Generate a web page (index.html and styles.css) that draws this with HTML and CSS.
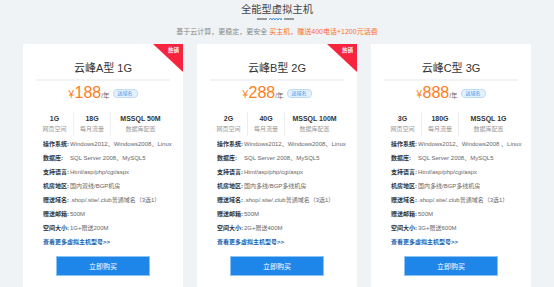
FILE: index.html
```html
<!DOCTYPE html>
<html lang="zh-CN">
<head>
<meta charset="utf-8">
<title>全能型虚拟主机</title>
<link rel="stylesheet" href="styles.css">
</head>
<body>
<div class="page">
  <header class="head">
    <h1 class="head-title">全能型虚拟主机</h1>
    <div class="deco">
      <span class="deco-line"></span>
      <svg class="deco-wave" width="13" height="4" viewBox="0 0 13 4"><path d="M0 3 L1.5 1 L3 3 L4.5 1 L6 3 L7.5 1 L9 3 L10.5 1 L12 3 L13 1" fill="none" stroke="#3a8ee6" stroke-width="1"/></svg>
      <span class="deco-line"></span>
    </div>
    <p class="head-sub">基于云计算，更稳定，更安全 <span class="hl">买主机，赠送400电话+1200元话费</span></p>
  </header>

  <div class="cards">
    <div class="card">
      <span class="hot"></span><span class="hot-text">热销</span>
      <div class="card-title">云峰A型 1G</div>
      <div class="price"><span class="yen">¥</span><span class="num">188</span><span class="unit">/年</span><span class="badge">送域名</span></div>
      <div class="specs">
        <div class="spec"><b>1G</b><span>网页空间</span></div>
        <div class="spec"><b>18G</b><span>每月流量</span></div>
        <div class="spec"><b>MSSQL 50M</b><span>数据库配置</span></div>
      </div>
      <ul class="rows">
        <li><b>操作系统:</b>Windows2012、Windows2008、Linux</li>
        <li><b>数据库:</b>SQL Server 2008、MySQL5</li>
        <li><b>支持语言:</b>Html/asp/php/cgi/aspx</li>
        <li><b>机房地区:</b>国内双线/BGP机房</li>
        <li><b>赠送域名:</b>.shop/.site/.club普通域名（3选1）</li>
        <li><b>赠送邮箱:</b>500M</li>
        <li><b>空间大小:</b>1G+赠送200M</li>
      </ul>
      <a class="more" href="#">查看更多虚拟主机型号&gt;&gt;</a>
      <button class="buy">立即购买</button>
    </div>

    <div class="card">
      <span class="hot"></span><span class="hot-text">热销</span>
      <div class="card-title">云峰B型 2G</div>
      <div class="price"><span class="yen">¥</span><span class="num">288</span><span class="unit">/年</span><span class="badge">送域名</span></div>
      <div class="specs">
        <div class="spec"><b>2G</b><span>网页空间</span></div>
        <div class="spec"><b>40G</b><span>每月流量</span></div>
        <div class="spec"><b>MSSQL 100M</b><span>数据库配置</span></div>
      </div>
      <ul class="rows">
        <li><b>操作系统:</b>Windows2012、Windows2008、Linux</li>
        <li><b>数据库:</b>SQL Server 2008、MySQL5</li>
        <li><b>支持语言:</b>Html/asp/php/cgi/aspx</li>
        <li><b>机房地区:</b>国内多线/BGP多线机房</li>
        <li><b>赠送域名:</b>.shop/.site/.club普通域名（3选1）</li>
        <li><b>赠送邮箱:</b>500M</li>
        <li><b>空间大小:</b>2G+赠送400M</li>
      </ul>
      <a class="more" href="#">查看更多虚拟主机型号&gt;&gt;</a>
      <button class="buy">立即购买</button>
    </div>

    <div class="card">
      <div class="card-title">云峰C型 3G</div>
      <div class="price"><span class="yen">¥</span><span class="num">888</span><span class="unit">/年</span><span class="badge">送域名</span></div>
      <div class="specs">
        <div class="spec"><b>3G</b><span>网页空间</span></div>
        <div class="spec"><b>180G</b><span>每月流量</span></div>
        <div class="spec"><b>MSSQL 1G</b><span>数据库配置</span></div>
      </div>
      <ul class="rows">
        <li><b>操作系统:</b>Windows2012、Windows2008 、Linux</li>
        <li><b>数据库:</b>SQL Server 2008、MySQL5</li>
        <li><b>支持语言:</b>Html/asp/php/cgi/aspx</li>
        <li><b>机房地区:</b>国内多线/BGP多线机房</li>
        <li><b>赠送域名:</b>.shop/.site/.club普通域名（3选1）</li>
        <li><b>赠送邮箱:</b>500M</li>
        <li><b>空间大小:</b>3G+赠送600M</li>
      </ul>
      <a class="more" href="#">查看更多虚拟主机型号&gt;&gt;</a>
      <button class="buy">立即购买</button>
    </div>
  </div>
</div>
</body>
</html>
```

FILE: styles.css
```css
html, body {
  margin: 0;
  padding: 0;
  overflow: hidden;
  background: #eff3f5;
}
body {
  font-family: "Liberation Sans", "Noto Sans CJK SC", sans-serif;
  color: #333;
}
.page {
  width: 554px;
  height: 287px;
  overflow: hidden;
}
.head {
  padding-top: 3px;
  text-align: center;
}
.head-title {
  margin: 0;
  font-size: 10.3px;
  line-height: 14px;
  font-weight: normal;
  color: #444;
}
.deco {
  display: flex;
  justify-content: center;
  align-items: center;
  gap: 2px;
  height: 4px;
  margin-left: -4px;
}
.deco-line {
  width: 10px;
  height: 1.5px;
  background: #999;
}
.deco-wave {
  display: block;
}
.head-sub {
  margin: 6px 0 0;
  font-size: 7px;
  line-height: 10px;
  color: #888;
}
.hl {
  color: #ff6a2c;
}
.cards {
  display: grid;
  grid-template-columns: repeat(3, 160px);
  gap: 14px;
  padding: 0 23px;
  margin-top: 7px;
}
.card {
  position: relative;
  background: #fff;
  padding: 17px 20px 20px;
  height: 260px;
}
.hot {
  position: absolute;
  top: 0;
  right: 0;
  width: 0;
  height: 0;
  border-top: 28px solid #f6243f;
  border-left: 30px solid transparent;
}
.hot-text {
  position: absolute;
  top: 3px;
  right: 4px;
  font-size: 5.5px;
  line-height: 7px;
  color: #fff;
  font-weight: bold;
}
.card-title {
  font-size: 11px;
  line-height: 14px;
  text-align: center;
  color: #333;
  margin: 0 -7px;
  padding-bottom: 4px;
  border-bottom: 2px solid #f2f3f4;
}
.price {
  margin-top: 4px;
  height: 16px;
  display: flex;
  justify-content: center;
  align-items: baseline;
  color: #ff7d1a;
  line-height: 16px;
}
.yen {
  font-size: 10px;
  margin-right: 0.5px;
}
.num {
  font-size: 16px;
}
.unit {
  font-size: 6.5px;
  color: #666;
}
.badge {
  align-self: center;
  margin-left: 3px;
  margin-top: 1px;
  height: 7px;
  line-height: 7px;
  padding: 0 4px;
  font-size: 5px;
  color: #3f8ee8;
  background: #e4f1fd;
  border: 0.5px solid #bcdcfa;
  border-radius: 4px;
}
.specs {
  margin: 11px -7px 0;
  display: grid;
  grid-template-columns: 37px 37px 1fr;
}
.spec {
  display: flex;
  flex-direction: column;
  align-items: center;
  padding: 2px 0;
}
.spec + .spec {
  border-left: 1px solid #eeeeee;
}
.spec b {
  font-size: 7px;
  line-height: 10px;
  color: #333;
  white-space: nowrap;
}
.spec span {
  font-size: 6px;
  line-height: 10px;
  color: #999;
  white-space: nowrap;
}
.rows {
  list-style: none;
  margin: 1px 0 0;
  padding: 0;
}
.rows li {
  font-size: 6px;
  line-height: 14px;
  color: #666;
  white-space: nowrap;
}
.rows b {
  display: inline-block;
  width: 27px;
  color: #333;
}
.more {
  display: block;
  font-size: 6px;
  line-height: 14px;
  font-weight: bold;
  color: #1d5eb0;
  text-decoration: none;
}
.buy {
  display: block;
  margin: 7px auto 0;
  width: 94px;
  height: 20px;
  padding: 0;
  background: #1f86e9;
  border: 1px solid #8cc4f6;
  color: #fff;
  font-family: inherit;
  font-size: 7px;
}
```
